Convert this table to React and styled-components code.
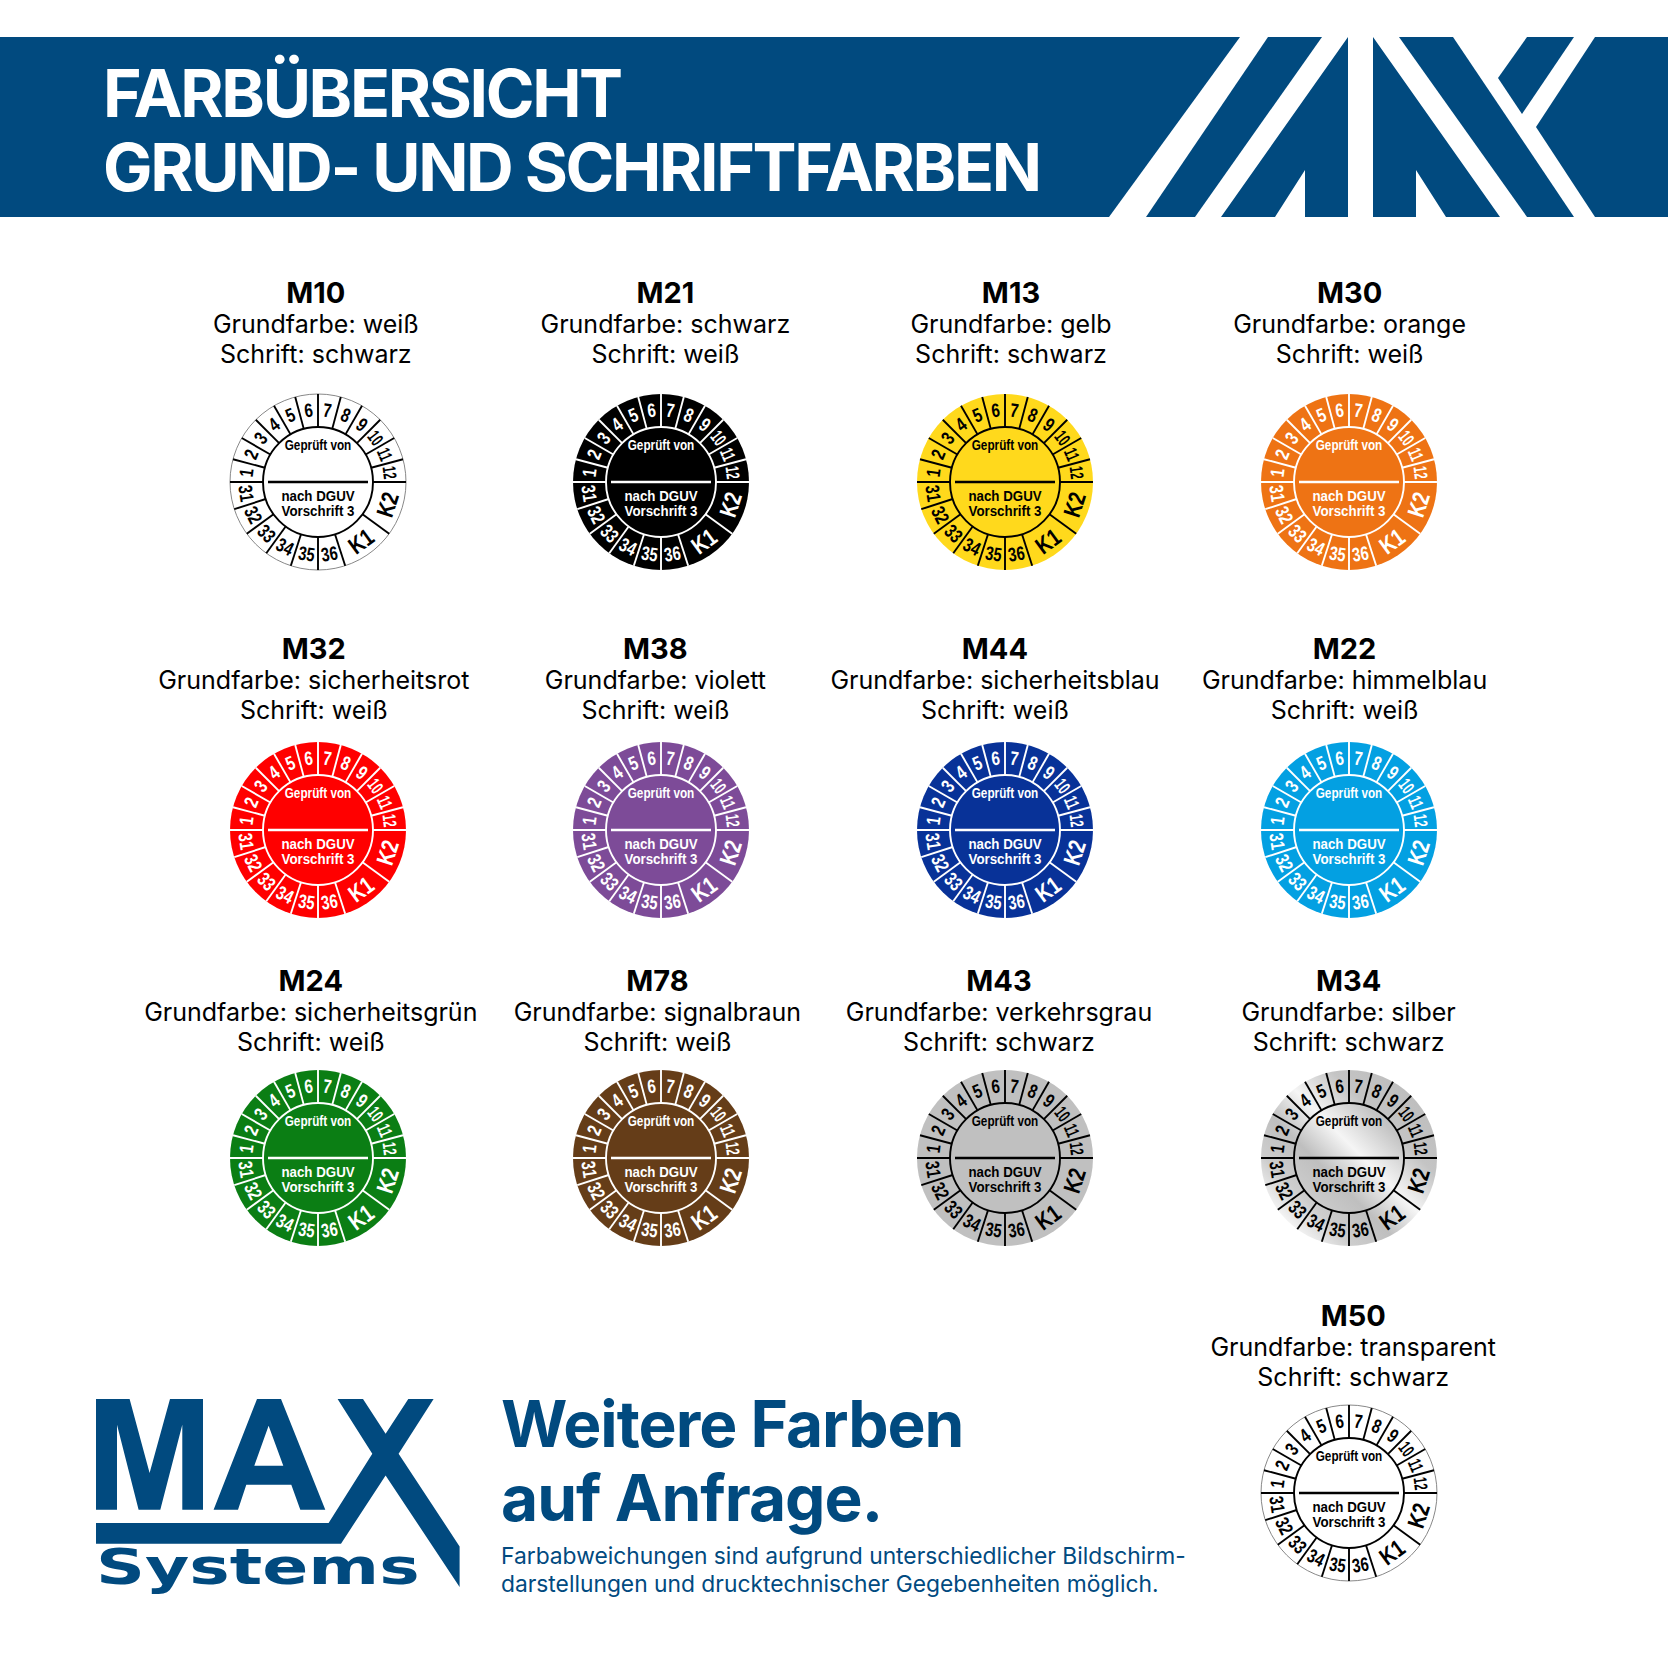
import React from "react";
import styled, { createGlobalStyle } from "styled-components";

const BLUE = "#014a7f";

const Global = createGlobalStyle`
  html, body { margin: 0; padding: 0; background: #fff; }
  #root { width: 1668px; height: 1668px; overflow: hidden; }
`;

const Page = styled.div`
  width: 1668px;
  height: 1668px;
  background: #fff;
  display: flex;
  flex-direction: column;
  font-family: Inter, "Noto Sans", sans-serif;
  color: #000;
`;

const Header = styled.header`
  margin-top: 37px;
  height: 180px;
  display: flex;
`;

const Band = styled.div`
  flex: 1;
  background: ${BLUE};
  box-sizing: border-box;
  padding: 19px 0 0 103px;
`;

const HeaderTitle = styled.h1`
  margin: 0;
  color: #fff;
  font-family: Inter, sans-serif;
  font-weight: 700;
  font-size: 66px;
  line-height: 74px;
  letter-spacing: -2.35px;
  white-space: nowrap;
`;

const BandArt = styled.svg`
  display: block;
  width: 568px;
  height: 180px;
  flex: none;
`;

const Row = styled.div`
  display: grid;
  grid-template-columns: repeat(4, 343.6px);
  padding-left: 146px;
  margin-top: ${(p) => p.$mt}px;
`;

const Item = styled.div`
  display: flex;
  flex-direction: column;
  align-items: center;
  width: 343.6px;
  flex: none;
`;

const Label = styled.div`
  display: flex;
  flex-direction: column;
  align-items: center;
  margin-left: ${(p) => (p.$dx || 0) * 2}px;
  white-space: nowrap;
`;

const Code = styled.div`
  font-weight: 700;
  font-size: 29px;
  line-height: 32px;
`;

const Line = styled.div`
  font-weight: 400;
  font-size: 25px;
  line-height: 30px;
`;

const SealBox = styled.div`
  margin-top: ${(p) => p.$gap}px;
  width: 180px;
  height: 180px;
`;

const BottomRow = styled.div`
  display: flex;
  align-items: flex-start;
  margin-top: 52.4px;
  padding: 0 147px 0 96px;
`;

const Brand = styled.div`
  flex: 1;
  min-width: 0;
  display: flex;
  align-items: flex-start;
  gap: 41px;
  margin-top: 86.75px;
`;

const LogoSvg = styled.svg`
  display: block;
  width: 364px;
  height: 199px;
  margin-top: 12.5px;
  flex: none;
`;

const Note = styled.div`
  display: flex;
  flex-direction: column;
  color: ${BLUE};
`;

const Headline = styled.h2`
  margin: 0;
  font-weight: 700;
  font-size: 64px;
  line-height: 74px;
  letter-spacing: -1px;
  white-space: nowrap;
`;

const Small = styled.p`
  margin: 7px 0 0;
  font-size: 22.8px;
  line-height: 28px;
  font-weight: 400;
  white-space: nowrap;
`;

const rad = (d) => (d * Math.PI) / 180;
const pt = (r, d) => [r * Math.sin(rad(d)), -r * Math.cos(rad(d))];

const SEAL_FONT = "'Liberation Sans', Arial, sans-serif";

function Num({ t, a, r, size, sx, flip, fill }) {
  const [x, y] = pt(r, a);
  const rot = flip ? a - 180 : a;
  return (
    <g transform={`translate(${x.toFixed(2)} ${y.toFixed(2)}) rotate(${rot})`}>
      <text
        transform={`scale(${sx} 1)`}
        y={size * 0.358}
        textAnchor="middle"
        fontSize={size}
        fontWeight="700"
        fontFamily={SEAL_FONT}
        fill={fill}
      >
        {t}
      </text>
    </g>
  );
}

function Seal({ bg, fg, outline, silver, id }) {
  const R = 88;
  const r = 55;
  const rt = 72.5;
  const angles = [];
  for (let i = 0; i <= 12; i++) angles.push(-90 + 15 * i);
  [126, 162, 180, 198, 216, 234, 252].forEach((a) => angles.push(a));
  const top = Array.from({ length: 12 }, (_, i) => ({ t: String(i + 1), a: -90 + 15 * (i + 0.5) }));
  const bottom = [
    ["31", 261],
    ["32", 243],
    ["33", 225],
    ["34", 207],
    ["35", 189],
    ["36", 171],
  ];
  const gid = `silver-${id}`;
  return (
    <svg width="180" height="180" viewBox="-90 -90 180 180">
      {silver && (
        <defs>
          <linearGradient id={gid} x1="1" y1="0" x2="0" y2="1">
            <stop offset="0" stopColor="#b9b9b9" />
            <stop offset="0.3" stopColor="#c4c4c4" />
            <stop offset="0.46" stopColor="#f5f5f5" />
            <stop offset="0.6" stopColor="#bfbfbf" />
            <stop offset="0.74" stopColor="#cdcdcd" />
            <stop offset="0.88" stopColor="#fcfcfc" />
            <stop offset="1" stopColor="#cccccc" />
          </linearGradient>
        </defs>
      )}
      <circle
        r={R}
        fill={silver ? `url(#${gid})` : bg}
        stroke={outline ? "#6a6a6a" : "none"}
        strokeWidth={outline ? 0.8 : 0}
      />
      <circle r={r} fill="none" stroke={fg} strokeWidth="1.9" />
      {angles.map((a) => {
        const [x1, y1] = pt(r, a);
        const [x2, y2] = pt(R, a);
        return (
          <line key={a} x1={x1} y1={y1} x2={x2} y2={y2} stroke={fg} strokeWidth="1.9" />
        );
      })}
      <line x1="-50" y1="0" x2="50" y2="0" stroke={fg} strokeWidth="2.3" />
      {top.map(({ t, a }) => (
        <Num
          key={t}
          t={t}
          a={a}
          r={rt}
          size={t.length > 1 ? 18.5 : 19.5}
          sx={t.length > 1 ? 0.62 : 0.78}
          fill={fg}
        />
      ))}
      {bottom.map(([t, a]) => (
        <Num key={t} t={t} a={a} r={rt} size={19.5} sx={0.76} flip fill={fg} />
      ))}
      <Num t="K1" a={144} r={73} size={24} sx={0.8} flip fill={fg} />
      <Num t="K2" a={108} r={73} size={24} sx={0.8} flip fill={fg} />
      <text
        transform="translate(0 -32.5) scale(0.84 1)"
        textAnchor="middle"
        fontSize="14"
        fontWeight="700"
        fontFamily={SEAL_FONT}
        fill={fg}
      >
        Geprüft von
      </text>
      <text
        transform="translate(0 18.5) scale(0.86 1)"
        textAnchor="middle"
        fontSize="15.5"
        fontWeight="700"
        fontFamily={SEAL_FONT}
        fill={fg}
      >
        nach DGUV
      </text>
      <text
        transform="translate(0 33.5) scale(0.86 1)"
        textAnchor="middle"
        fontSize="15.5"
        fontWeight="700"
        fontFamily={SEAL_FONT}
        fill={fg}
      >
        Vorschrift 3
      </text>
    </svg>
  );
}

function SealItem({ data, gap }) {
  return (
    <Item>
      <Label $dx={data.dx}>
        <Code>{data.code}</Code>
        <Line>Grundfarbe: {data.ground}</Line>
        <Line>Schrift: {data.script}</Line>
      </Label>
      <SealBox $gap={gap}>
        <Seal
          id={data.code}
          bg={data.bg}
          fg={data.fg}
          outline={data.outline}
          silver={data.silver}
        />
      </SealBox>
    </Item>
  );
}

const ROWS = [
  {
    mt: 59.6,
    gap: 23.4,
    items: [
      { code: "M10", ground: "weiß", script: "schwarz", bg: "#ffffff", fg: "#000", outline: true, dx: -2 },
      { code: "M21", ground: "schwarz", script: "weiß", bg: "#000000", fg: "#fff", dx: 4 },
      { code: "M13", ground: "gelb", script: "schwarz", bg: "#ffd91c", fg: "#000", dx: 6 },
      { code: "M30", ground: "orange", script: "weiß", bg: "#ee7314", fg: "#fff", dx: 1 },
    ],
  },
  {
    mt: 61,
    gap: 15,
    items: [
      { code: "M32", ground: "sicherheitsrot", script: "weiß", bg: "#ff0000", fg: "#fff", dx: -4 },
      { code: "M38", ground: "violett", script: "weiß", bg: "#7d4b98", fg: "#fff", dx: -6 },
      { code: "M44", ground: "sicherheitsblau", script: "weiß", bg: "#083298", fg: "#fff", dx: -10 },
      { code: "M22", ground: "himmelblau", script: "weiß", bg: "#03a0e2", fg: "#fff", dx: -4 },
    ],
  },
  {
    mt: 45,
    gap: 10.6,
    items: [
      { code: "M24", ground: "sicherheitsgrün", script: "weiß", bg: "#0b7e14", fg: "#fff", dx: -7 },
      { code: "M78", ground: "signalbraun", script: "weiß", bg: "#653d18", fg: "#fff", dx: -4 },
      { code: "M43", ground: "verkehrsgrau", script: "schwarz", bg: "#c0c0c0", fg: "#000", dx: -6 },
      { code: "M34", ground: "silber", script: "schwarz", bg: "#c8c8c8", fg: "#000", silver: true, dx: 0 },
    ],
  },
];

const M50 = { code: "M50", ground: "transparent", script: "schwarz", bg: "#ffffff", fg: "#000", outline: true, dx: 4 };

function BandLogo() {
  const shapes = [
    "0,0 140,0 9,180 0,180",
    "168,0 222,0 95,180 46,180",
    "248,0 248,180 205,180 205,133 175,180 121,180",
    "273,0 400,180 346,180 316,133 316,180 273,180",
    "299,0 353,0 474,180 427,180",
    "427,0 474,0 422,77 398,41",
    "495,0 569,0 569,180 495,180 436,90",
  ];
  return (
    <BandArt viewBox="0 0 568 180">
      {shapes.map((p) => (
        <polygon key={p} points={p} fill={BLUE} />
      ))}
    </BandArt>
  );
}

function MaxLogo() {
  return (
    <LogoSvg viewBox="0 0 364 199">
      <polygon
        fill={BLUE}
        points="0,0 33.6,0 53.6,74 74,0 107,0 107,110.7 86.3,110.7 86.3,25.7 64.3,110.7 42.6,110.7 21,25.7 21,110.7 0,110.7"
      />
      <path
        fill={BLUE}
        fillRule="evenodd"
        d="M161,0 L185,0 L229.3,110.7 L204.3,110.7 L195.3,85.7 L150.3,85.7 L142,110.7 L117.6,110.7 Z M172.6,26.7 L187.3,66.7 L158.3,66.7 Z"
      />
      <polygon
        fill={BLUE}
        points="241.6,0 267,0 289.6,34.7 312.3,0 337.6,0 302.6,54.7 363.6,147.4 363.6,188 289.6,76.4 245,144.7 0,144.7 0,124 232.6,124 276.3,54.7"
      />
      <text
        x="0"
        y="185"
        fontSize="50"
        fontWeight="700"
        fontFamily="'DejaVu Sans', Verdana, sans-serif"
        textLength="323.6"
        lengthAdjust="spacingAndGlyphs"
        fill={BLUE}
      >
        Systems
      </text>
    </LogoSvg>
  );
}

export default function App() {
  return (
    <>
      <Global />
      <Page>
        <Header>
          <Band>
            <HeaderTitle>
              FARBÜBERSICHT
              <br />
              GRUND- UND SCHRIFTFARBEN
            </HeaderTitle>
          </Band>
          <BandLogo />
        </Header>
        {ROWS.map((row, i) => (
          <Row key={i} $mt={row.mt}>
            {row.items.map((d) => (
              <SealItem key={d.code} data={d} gap={row.gap} />
            ))}
          </Row>
        ))}
        <BottomRow>
          <Brand>
            <MaxLogo />
            <Note>
              <Headline>
                Weitere Farben
                <br />
                auf Anfrage.
              </Headline>
              <Small>
                Farbabweichungen sind aufgrund unterschiedlicher Bildschirm-
                <br />
                darstellungen und drucktechnischer Gegebenheiten möglich.
              </Small>
            </Note>
          </Brand>
          <SealItem data={M50} gap={11} />
        </BottomRow>
      </Page>
    </>
  );
}
